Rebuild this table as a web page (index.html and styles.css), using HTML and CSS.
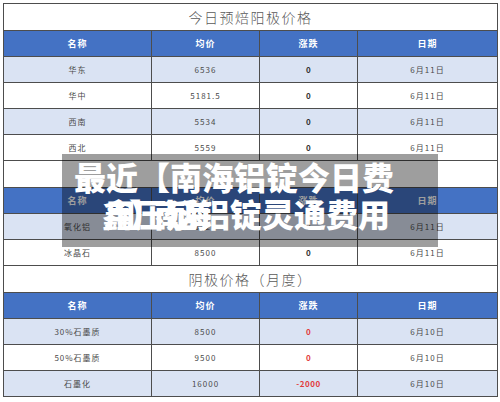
FILE: index.html
```html
<!DOCTYPE html>
<html lang="zh-CN">
<head>
<meta charset="utf-8">
<title>今日预焙阳极价格</title>
<link rel="stylesheet" href="styles.css">
</head>
<body>
<div class="page">
  <table class="price">
    <colgroup>
      <col class="c1"><col class="c2"><col class="c3"><col class="c4">
    </colgroup>
    <tbody>
      <tr class="title"><td colspan="4">今日预焙阳极价格</td></tr>
      <tr class="head"><td>名称</td><td>均价</td><td>涨跌</td><td>日期</td></tr>
      <tr class="alt"><td>华东</td><td>6536</td><td class="chg">0</td><td>6月11日</td></tr>
      <tr><td>华中</td><td>5181.5</td><td class="chg">0</td><td>6月11日</td></tr>
      <tr class="alt"><td>西南</td><td>5534</td><td class="chg">0</td><td>6月11日</td></tr>
      <tr><td>西北</td><td>5559</td><td class="chg">0</td><td>6月11日</td></tr>
      <tr class="title"><td colspan="4"></td></tr>
      <tr class="head"><td>名称</td><td>均价</td><td>涨跌</td><td>日期</td></tr>
      <tr class="alt"><td>氧化铝</td><td>3120</td><td class="chg">0</td><td>6月11日</td></tr>
      <tr><td>冰晶石</td><td>8500</td><td class="chg">0</td><td>6月11日</td></tr>
      <tr class="title"><td colspan="4">阴极价格（月度）</td></tr>
      <tr class="head"><td>名称</td><td>均价</td><td>涨跌</td><td>日期</td></tr>
      <tr class="alt"><td>30%石墨质</td><td>8500</td><td class="chg red">0</td><td>6月10日</td></tr>
      <tr><td>50%石墨质</td><td>9500</td><td class="chg red">0</td><td>6月10日</td></tr>
      <tr class="alt"><td>石墨化</td><td>16000</td><td class="chg red">-2000</td><td>6月10日</td></tr>
    </tbody>
  </table>
  <div class="overlay">
    <div class="ov-line first">最近【南海铝锭今日费</div>
    <div class="ov-line second">鑫压延铝锭灵通费用<span class="ghost">用】南海</span></div>
  </div>
</div>
</body>
</html>
```
FILE: styles.css
```css
html, body {
  margin: 0;
  padding: 0;
  background: #ffffff;
}

.page {
  position: relative;
  width: 500px;
  height: 402px;
  padding: 3px 0 0 3px;
  box-sizing: border-box;
  font-family: "Noto Sans CJK SC", "Noto Sans", sans-serif;
}

.price {
  width: 494px;
  table-layout: fixed;
  border-collapse: collapse;
  border: 1px solid #333333;
}

.c1 { width: 148px; }
.c2 { width: 108px; }
.c3 { width: 98px; }
.c4 { width: 140px; }

.price td {
  padding: 0;
  border: 1px solid #4d4d4d;
  text-align: center;
  vertical-align: middle;
  font-size: 8px;
  line-height: 10px;
  letter-spacing: 1px;
  color: #4a4a4a;
  height: 25px;
  white-space: nowrap;
}

.price tr.title td {
  height: 26px;
  font-size: 14px;
  line-height: 16px;
  letter-spacing: 1.5px;
  color: #5a5a5a;
  font-weight: 300;
  background: #ffffff;
}

.price tr.head td {
  background: #4472c4;
  color: #ffffff;
  font-weight: 700;
  font-size: 9px;
  letter-spacing: 1px;
}

.price tr.alt td {
  background: #dae3f3;
}

.price td.chg {
  font-weight: 700;
  color: #333333;
  letter-spacing: 0.5px;
}

.price td.red {
  color: #e23b3b;
}

.overlay {
  position: absolute;
  left: 62px;
  top: 154px;
  width: 376px;
  height: 93px;
  padding-top: 4px;
  box-sizing: border-box;
  background: rgba(0, 0, 0, 0.38);
  color: #ffffff;
  font-family: "Noto Sans CJK SC", sans-serif;
  font-weight: 900;
  font-size: 32px;
  line-height: 37px;
  white-space: nowrap;
}

.ov-line {
  position: relative;
}

.ov-line.first {
  padding-left: 12px;
}

.ov-line.second {
  padding-left: 40px;
}

.ghost {
  position: absolute;
  left: 42px;
  top: 0;
  letter-spacing: -7px;
}
```
